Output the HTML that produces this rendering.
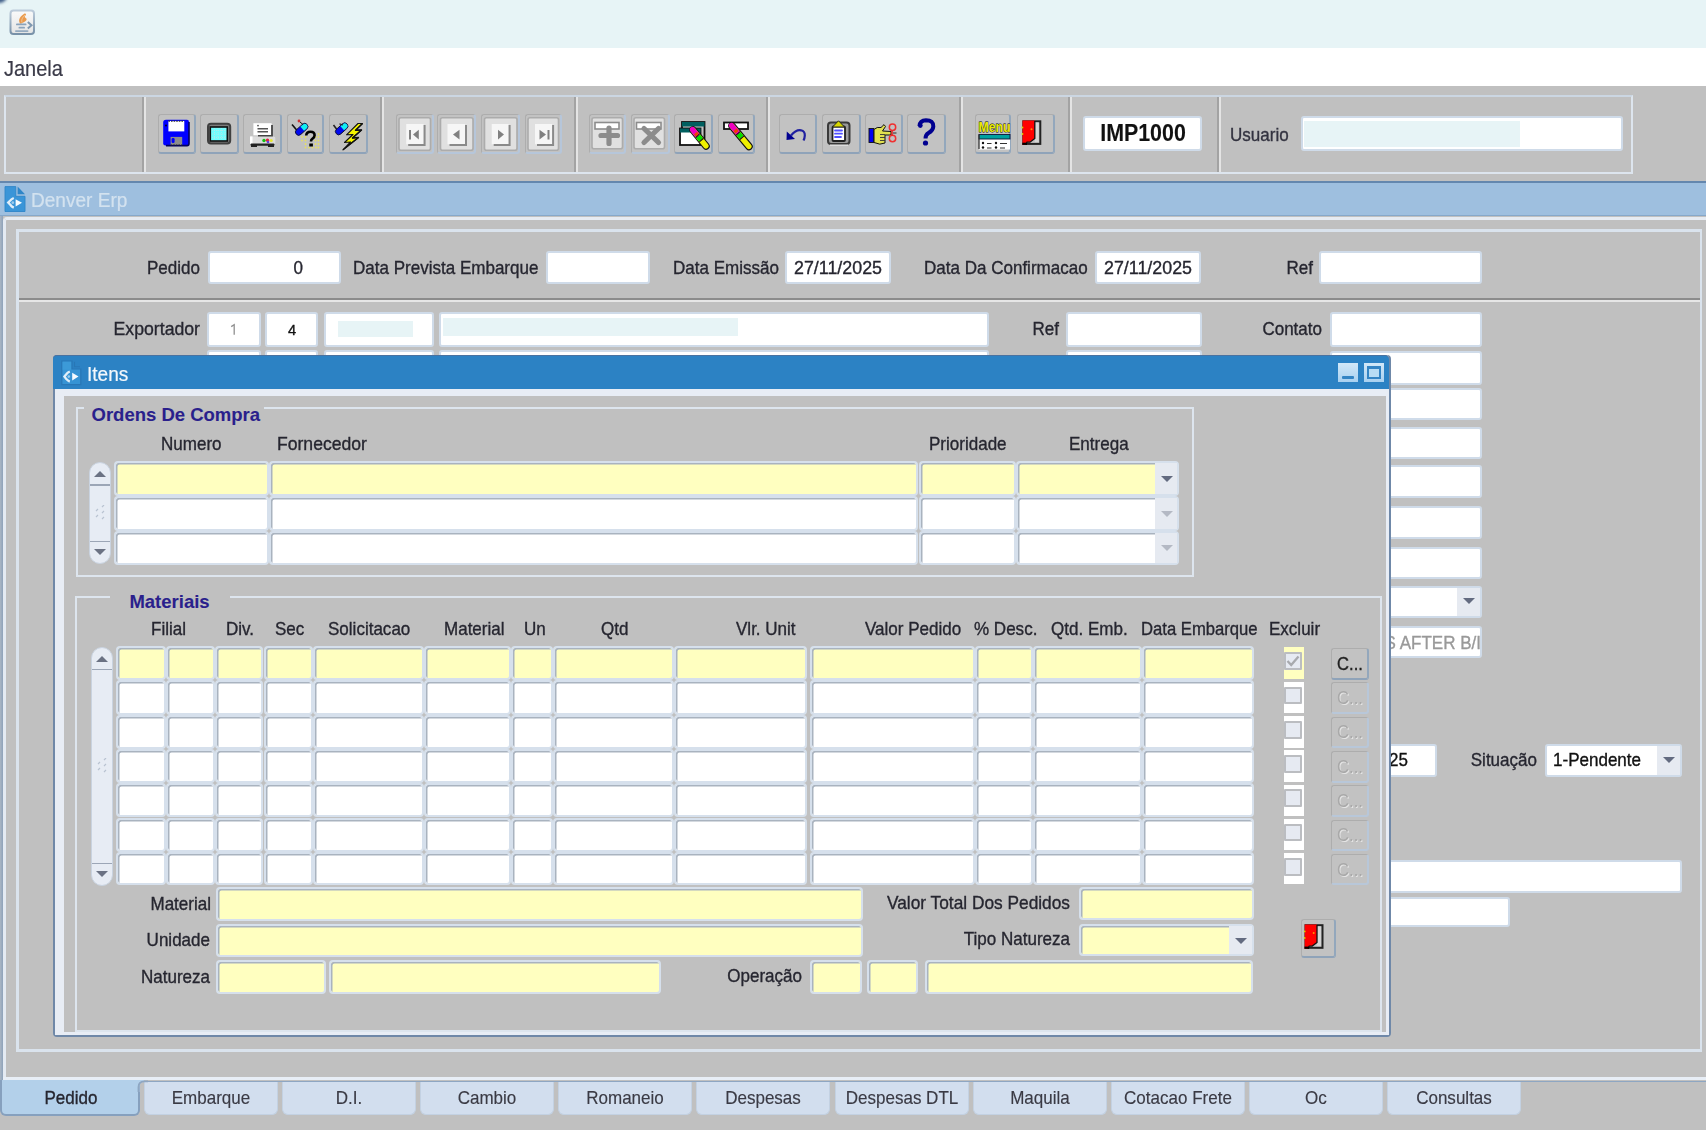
<!DOCTYPE html>
<html><head><meta charset="utf-8"><title>Denver Erp</title><style>
*{margin:0;padding:0;box-sizing:border-box}
html,body{width:1706px;height:1130px;overflow:hidden;background:#c0c0c0;font-family:"Liberation Sans",sans-serif;color:#262630}
div,span{position:absolute}
.t{white-space:nowrap}
.f{background:#fff;border:2px solid #cfdbe9;border-radius:3px}
.g{background:#fff;border:2px solid #d6e0ec;border-radius:4px;box-shadow:inset 1.5px 1.5px 0 #a9b3bf}
.y{background:#ffffc0}
.btn{border-radius:3px;border-top:1px solid #adadad;border-left:1px solid #adadad;border-right:2px solid #93a7bc;border-bottom:2px solid #8fa3b9;background:#c2c2c2}
.dd{background:#e6eaf1}
</style></head><body>
<div style="left:0px;top:0px;width:1706px;height:48px;background:#e7f4f6"></div>
<div style="left:-9px;top:-11px;width:16px;height:14px;border-radius:50%;background:#3d5c86;filter:blur(1.5px)"></div>
<svg style="position:absolute;left:0px;top:0px" width="45" height="45" viewBox="0 0 45 45"><defs><linearGradient id="jb" x1="0" y1="0" x2="0" y2="1"><stop offset="0" stop-color="#bccbda"/><stop offset="1" stop-color="#7891a8"/></linearGradient>
<linearGradient id="jf" x1="0" y1="0" x2="0" y2="1"><stop offset="0" stop-color="#fafafa"/><stop offset="1" stop-color="#e4e4e4"/></linearGradient></defs>
<rect x="10.5" y="10.5" width="23.5" height="23.5" rx="3" fill="url(#jf)" stroke="url(#jb)" stroke-width="2"/>
<path d="M20 23.5 C17.5 19 21 16 24.5 13.5 C26 13 26.5 14.5 25.5 15.5 C23 18 27.5 17.5 26.5 20 C25.5 22 22 22.5 21 23.8 Z" fill="#ea9a4c"/>
<path d="M22 22.5 C21 19.5 23 17 25 15" stroke="#f6d0a8" stroke-width="0.8" fill="none"/>
<rect x="16" y="23.5" width="10.5" height="1.8" rx="0.9" fill="#8ba3bb"/>
<rect x="18.5" y="26.8" width="6.5" height="1.8" rx="0.9" fill="#8ba3bb"/>
<rect x="15" y="30.2" width="13.5" height="1.8" rx="0.9" fill="#95abc0"/>
<path d="M27.8 22 L31.5 25.3 L27.8 28.6" stroke="#7f98b0" stroke-width="2" fill="none"/></svg>
<div style="left:0px;top:48px;width:1706px;height:38px;background:#fff"></div>
<span class="t" style="top:58.8px;font-size:21.5px;line-height:21.5px;color:#3a3a48;-webkit-text-stroke:0.2px #3a3a48;left:4px;transform:scaleX(0.93);transform-origin:left;">Janela</span>
<div style="left:4px;top:95px;width:1629px;height:79px;border:2px solid #dde5ee;border-top-color:#cbd6e2"></div>
<div style="left:142px;top:97px;width:2px;height:75px;background:#a3a3a3"></div>
<div style="left:144px;top:97px;width:2px;height:75px;background:#e4e4e4"></div>
<div style="left:380px;top:97px;width:2px;height:75px;background:#a3a3a3"></div>
<div style="left:382px;top:97px;width:2px;height:75px;background:#e4e4e4"></div>
<div style="left:574px;top:97px;width:2px;height:75px;background:#a3a3a3"></div>
<div style="left:576px;top:97px;width:2px;height:75px;background:#e4e4e4"></div>
<div style="left:766px;top:97px;width:2px;height:75px;background:#a3a3a3"></div>
<div style="left:768px;top:97px;width:2px;height:75px;background:#e4e4e4"></div>
<div style="left:959px;top:97px;width:2px;height:75px;background:#a3a3a3"></div>
<div style="left:961px;top:97px;width:2px;height:75px;background:#e4e4e4"></div>
<div style="left:1068px;top:97px;width:2px;height:75px;background:#a3a3a3"></div>
<div style="left:1070px;top:97px;width:2px;height:75px;background:#e4e4e4"></div>
<div style="left:1217px;top:97px;width:2px;height:75px;background:#a3a3a3"></div>
<div style="left:1219px;top:97px;width:2px;height:75px;background:#e4e4e4"></div>
<div class="btn" style="left:158px;top:114.2px;width:37.5px;height:39.7px;"></div>
<div class="btn" style="left:199.5px;top:114.2px;width:39px;height:39.7px;"></div>
<div class="btn" style="left:243px;top:114.2px;width:39px;height:39.7px;"></div>
<div class="btn" style="left:286.5px;top:114.2px;width:37.5px;height:39.7px;"></div>
<div class="btn" style="left:328.5px;top:114.2px;width:39px;height:39.7px;"></div>
<div class="btn" style="left:395.5px;top:114.2px;width:38px;height:39.7px;border-right-color:#b6c6da;border-bottom-color:#b6c6da"></div>
<div class="btn" style="left:437px;top:114.2px;width:39px;height:39.7px;border-right-color:#b6c6da;border-bottom-color:#b6c6da"></div>
<div class="btn" style="left:481px;top:114.2px;width:39px;height:39.7px;border-right-color:#b6c6da;border-bottom-color:#b6c6da"></div>
<div class="btn" style="left:524.5px;top:114.2px;width:37px;height:39.7px;border-right-color:#b6c6da;border-bottom-color:#b6c6da"></div>
<div class="btn" style="left:588.5px;top:114.2px;width:37.5px;height:39.7px;border-right-color:#b6c6da;border-bottom-color:#b6c6da"></div>
<div class="btn" style="left:630.5px;top:114.2px;width:39px;height:39.7px;border-right-color:#b6c6da;border-bottom-color:#b6c6da"></div>
<div class="btn" style="left:674px;top:114.2px;width:38.5px;height:39.7px;"></div>
<div class="btn" style="left:717.5px;top:114.2px;width:37px;height:39.7px;"></div>
<div class="btn" style="left:778.5px;top:114.2px;width:38.5px;height:39.7px;"></div>
<div class="btn" style="left:822px;top:114.2px;width:38.5px;height:39.7px;"></div>
<div class="btn" style="left:865px;top:114.2px;width:37.5px;height:39.7px;"></div>
<div class="btn" style="left:907px;top:114.2px;width:38.5px;height:39.7px;"></div>
<div class="btn" style="left:975px;top:114.2px;width:36px;height:39.7px;"></div>
<div class="btn" style="left:1016.5px;top:114.2px;width:38.5px;height:39.7px;"></div>
<svg style="position:absolute;left:0;top:0" width="1706" height="180" viewBox="0 0 1706 180"><path d="M166 119.8 H187 Q189 119.8 189 122 V143.5 Q189 145.6 187 145.6 H165.5 Q163.2 145.6 163.2 143.5 V122.5 Q163.2 119.8 166 119.8Z" fill="#0000ff"/>
<path d="M189 122 V143.5 Q189 145.6 187 145.6 H166" stroke="#000060" stroke-width="1.6" fill="none"/>
<rect x="168.4" y="121" width="15.9" height="10.4" fill="#fff"/>
<path d="M168.4 121.2 H184.3" stroke="#333" stroke-width="1.2" stroke-dasharray="1.6 1"/>
<rect x="170.6" y="136.9" width="11.6" height="8" fill="#8c8c8c"/><rect x="171.6" y="138" width="3" height="5" rx="1.2" fill="#0000ff"/>
<path d="M170.6 145 H182.2" stroke="#222" stroke-width="1.2" stroke-dasharray="1.6 1"/>
<circle cx="166" cy="125.5" r="0.9" fill="#000"/>
<rect x="208" y="123.8" width="22.2" height="19.8" rx="3" fill="#7c7c7c" stroke="#404040" stroke-width="2"/>
<rect x="210.3" y="127" width="17" height="14" fill="#70ffff" stroke="#101010" stroke-width="1.6"/>
<path d="M212 130.5h14M212 134h14M212 137.5h14M214.5 128v12M218 128v12M221.5 128v12M225 128v12" stroke="#b8e8e8" stroke-width="0.8" stroke-dasharray="1 1"/>
<rect x="253.4" y="123.2" width="18.2" height="12.1" fill="#fff"/>
<path d="M272 125 V136 H258" stroke="#444" stroke-width="1.8" fill="none"/>
<path d="M257.5 128.7h10.5M257.5 131.8h10.5" stroke="#555" stroke-width="1.5"/><circle cx="258" cy="125.6" r="0.9" fill="#555"/>
<rect x="250" y="136.4" width="25.3" height="7.9" rx="1.5" fill="#dcdcdc"/><rect x="250" y="136.4" width="2.5" height="7.9" fill="#fff"/>
<circle cx="264" cy="140.5" r="1.7" fill="#10c010"/><circle cx="267.5" cy="140.3" r="1.7" fill="#e02040"/><circle cx="268" cy="142" r="1.3" fill="#6040e0"/><circle cx="271.2" cy="140.5" r="1.6" fill="#e8e830"/>
<rect x="250.5" y="143.6" width="24" height="2.2" rx="1" fill="#222"/><rect x="251" y="145" width="6" height="2" fill="#222"/><rect x="268" y="145" width="6" height="2" fill="#222"/>
<g fill="#e8e060"><circle cx="302" cy="137" r="0.9"/><circle cx="302" cy="140.5" r="0.9"/><circle cx="305.5" cy="137" r="0.9"/><circle cx="305.5" cy="140.5" r="0.9"/><circle cx="305.5" cy="144" r="0.9"/><circle cx="305.5" cy="147.5" r="0.9"/>
<circle cx="309" cy="147.5" r="0.9"/><circle cx="312.5" cy="147.5" r="0.9"/><circle cx="316" cy="147.5" r="0.9"/><circle cx="318.5" cy="147.5" r="0.9"/>
<circle cx="315.5" cy="137" r="0.9"/><circle cx="318.5" cy="134" r="0.9"/><circle cx="318.5" cy="137" r="0.9"/><circle cx="318.5" cy="140.5" r="0.9"/><circle cx="318.5" cy="144" r="0.9"/><circle cx="315.5" cy="140.5" r="0.9"/><circle cx="315.5" cy="144" r="0.9"/></g>
<path d="M292 124.5 L297.5 131" stroke="#111" stroke-width="1.6"/>
<g transform="rotate(-42 301.5 129.5)"><rect x="294.5" y="126.3" width="14.5" height="6.4" rx="3.2" fill="#0008f0" stroke="#101030" stroke-width="0.9"/><path d="M302.5 126.8 H306 Q308.6 126.8 308.6 129.5 Q308.6 132.2 306 132.2 H302.5 Z" fill="#10f0f0"/></g>
<circle cx="299" cy="121" r="1.4" fill="#d03030"/><path d="M300 122 L303 124.5" stroke="#111" stroke-width="1"/>
<path d="M306.2 135.5 Q306.5 131.7 310.5 131.7 Q314.6 131.7 314.6 135.3 Q314.6 137.5 312.3 138.8 Q311 139.6 311 141.5" stroke="#000" stroke-width="2.6" fill="none"/>
<rect x="309.3" y="143.5" width="3.6" height="3" fill="#000"/>
<path d="M333.5 125 L338 131" stroke="#222" stroke-width="1.6"/>
<g transform="rotate(-42 341.5 129)"><rect x="334.5" y="125.8" width="14.5" height="6.4" rx="3.2" fill="#0008f0" stroke="#101030" stroke-width="0.9"/><path d="M342.5 126.3 H346 Q348.6 126.3 348.6 129 Q348.6 131.7 346 131.7 H342.5 Z" fill="#10f0f0"/></g>
<path d="M339.5 123.8 L343 125" stroke="#222" stroke-width="1.3"/>
<path d="M362.5 123.5 L355.5 130.3 L361.5 130 L352.5 138 L358.5 137.5 L343 149.8 L350.5 142 L344.5 142.5 L353 134.5 L346.5 134.8 L358 123.5 Z" fill="#f6f600" stroke="#111" stroke-width="1.1" stroke-linejoin="round"/>
<path d="M362.5 123.5 L355.5 130.3 L361.5 130 L352.5 138 L358.5 137.5 L343 149.8" stroke="#111" stroke-width="1.4" fill="none" stroke-linejoin="round"/>
<rect x="399.0" y="117.7" width="31.5" height="32.6" rx="2" fill="#e0e0e0" stroke="#acacac" stroke-width="1.6"/>
<rect x="406.2" y="124" width="17.4" height="20.3" fill="#f6f6f6"/>
<path d="M408.2 145 H424.6 V125" stroke="#8a8a8a" stroke-width="2" fill="none"/><rect x="409" y="130" width="2" height="9.5" fill="#808080"/><path d="M418.8 129.8 V139.4 L413 134.6 Z" fill="#808080"/>
<rect x="440.5" y="117.7" width="32.5" height="32.6" rx="2" fill="#e0e0e0" stroke="#acacac" stroke-width="1.6"/>
<rect x="447.5" y="124" width="17.5" height="20.3" fill="#f6f6f6"/>
<path d="M449.5 145 H466 V125" stroke="#8a8a8a" stroke-width="2" fill="none"/><path d="M459.5 129.8 V139.4 L453 134.6 Z" fill="#808080"/>
<rect x="484.5" y="117.7" width="32.5" height="32.6" rx="2" fill="#e0e0e0" stroke="#acacac" stroke-width="1.6"/>
<rect x="491.7" y="124" width="16.9" height="20.3" fill="#f6f6f6"/>
<path d="M493.7 145 H509.6 V125" stroke="#8a8a8a" stroke-width="2" fill="none"/><path d="M498 129.8 V139.4 L504 134.6 Z" fill="#808080"/>
<rect x="528.0" y="117.7" width="30.5" height="32.6" rx="2" fill="#e0e0e0" stroke="#acacac" stroke-width="1.6"/>
<rect x="535" y="124" width="17.1" height="20.3" fill="#f6f6f6"/>
<path d="M537 145 H553.1 V125" stroke="#8a8a8a" stroke-width="2" fill="none"/><path d="M539.5 129.8 V139.4 L546 134.6 Z" fill="#808080"/><rect x="547.5" y="130" width="2" height="9.5" fill="#808080"/>
<rect x="592" y="117.7" width="30.5" height="31" rx="2" fill="#e0e0e0" stroke="#acacac" stroke-width="1.6"/>
<rect x="595" y="122.5" width="24" height="6.5" fill="#fff" stroke="#8c8c8c" stroke-width="1.6"/>
<path d="M609 128 V143.5 M601 135.5 H617.5" stroke="#8c8c8c" stroke-width="5.2" stroke-linecap="round"/>
<rect x="634" y="117.7" width="30.5" height="31" rx="2" fill="#e0e0e0" stroke="#acacac" stroke-width="1.6"/>
<rect x="636.5" y="122.5" width="24.5" height="6.5" fill="#fff" stroke="#8c8c8c" stroke-width="1.6"/>
<path d="M644 128.5 L658.5 142.5 M658.5 128.5 L644 142.5" stroke="#8c8c8c" stroke-width="5.2" stroke-linecap="round"/>
<rect x="682" y="122" width="22.5" height="17" fill="none" stroke="#111" stroke-width="1.8"/><rect x="682" y="122" width="22.5" height="4.5" fill="#005f5f"/>
<rect x="680" y="128.5" width="20.5" height="16.5" fill="#fff" stroke="#111" stroke-width="1.8"/><rect x="680" y="128.5" width="20.5" height="4" fill="#005f5f"/>
<path d="M693 130 L706 146" stroke="#111" stroke-width="7.5" stroke-linecap="round"/>
<path d="M693 130 L706 146" stroke="#f0f000" stroke-width="5.2" stroke-linecap="round"/>
<path d="M692.5 129.5 L697 135" stroke="#f000c0" stroke-width="5.2" stroke-linecap="round"/>
<path d="M695.5 133 L697.5 135.5" stroke="#f04000" stroke-width="4"/>
<path d="M698 136.2 L701 139.8" stroke="#00e000" stroke-width="5.2"/><path d="M697.3 135.5 L698 136.2 M701 139.8 L701.7 140.6" stroke="#111" stroke-width="5.2"/>
<rect x="724" y="122.5" width="24" height="6.5" fill="#fff" stroke="#111" stroke-width="1.8"/>
<path d="M732 126 L749 146.5" stroke="#111" stroke-width="7.5" stroke-linecap="round"/>
<path d="M732 126 L749 146.5" stroke="#f0f000" stroke-width="5.2" stroke-linecap="round"/>
<path d="M731.5 125.5 L737 132" stroke="#f000c0" stroke-width="5.2" stroke-linecap="round"/>
<path d="M735 129.8 L737 132.2" stroke="#f04000" stroke-width="4"/>
<path d="M738.5 133.8 L741.5 137.4" stroke="#00e000" stroke-width="5.2"/><path d="M737.8 133 L738.5 133.8 M741.5 137.4 L742.2 138.2" stroke="#111" stroke-width="5.2"/>
<path d="M786.8 131.5 L786.5 140 L795 139 Z" fill="#000090"/>
<path d="M791 135.5 Q796 129.5 801 130.3 Q805 131.2 804.8 135.5 Q804.6 138.5 803.5 140.5" stroke="#2020a0" stroke-width="2.2" fill="none"/>
<rect x="828" y="122.5" width="21.5" height="21.5" rx="3" fill="#9a9a9a" stroke="#3a3a3a" stroke-width="2"/>
<rect x="832.5" y="126.5" width="12.5" height="14.5" rx="1" fill="#fff" stroke="#202020" stroke-width="1.8"/>
<path d="M835 130.5h7M835 133.7h7M835 137h6" stroke="#5050ff" stroke-width="1.8" stroke-linecap="round"/>
<path d="M832.5 127 L838.5 120.8 L844.5 127 Z" fill="#d8d800" stroke="#222" stroke-width="1"/>
<rect x="830" y="144.5" width="18" height="1.2" fill="#e8e8e8"/>
<rect x="869" y="128.5" width="4.8" height="14" fill="#0000f0" stroke="#111" stroke-width="0.9"/>
<path d="M874 129.5 Q877 126.5 881 127.5 L884 124.6 L885.5 126.5 L882.5 131 L891 131.5 L891 135 L885 135 L885 143 Q880 145.5 874 142.5 Z" fill="#e0e050" stroke="#111" stroke-width="1"/>
<path d="M880 134.5h5M880 137.5h5M880 140.5h5" stroke="#333" stroke-width="0.9"/>
<circle cx="892.5" cy="127.3" r="3.2" fill="none" stroke="#f03030" stroke-width="1.5"/><circle cx="892.5" cy="138.5" r="3.2" fill="none" stroke="#f03030" stroke-width="1.5"/>
<path d="M892 130.5 L892 135.5" stroke="#e02020" stroke-width="1.5"/><path d="M893 133 L896.5 133" stroke="#444" stroke-width="1.2"/>
<path d="M919.5 126 Q920 120.5 926 120.3 Q933.5 120.3 933.3 126.5 Q933 130.5 928.5 133 Q925.5 134.8 925.5 138.5" stroke="#000090" stroke-width="4" fill="none"/>
<circle cx="920.3" cy="125.6" r="2.4" fill="#000090"/><circle cx="925.5" cy="143" r="2.6" fill="#000090"/>
<text x="978.5" y="131.5" font-family="Liberation Sans" font-weight="bold" font-size="15" fill="#e8e800" stroke="#000" stroke-width="0.8" paint-order="stroke" textLength="32" lengthAdjust="spacingAndGlyphs">Menu</text>
<rect x="979" y="134.5" width="31" height="15" fill="#fff"/><rect x="979" y="134.5" width="31" height="4.5" fill="#00a0a0" stroke="#113" stroke-width="0.9"/>
<path d="M979 134.5 V149" stroke="#333" stroke-width="1.3"/>
<circle cx="983" cy="143" r="1.2" fill="#111"/><circle cx="996" cy="143" r="1.2" fill="#111"/><circle cx="983" cy="147.5" r="1.2" fill="#111"/><circle cx="996" cy="147.5" r="1.2" fill="#111"/>
<path d="M987 143.5h4.5M1000 143.5h7M987 148h4.5M1000 148h5" stroke="#333" stroke-width="1.2"/>
<rect x="1023.3" y="121.3" width="17" height="22.6" fill="#c4c4c4" stroke="#222" stroke-width="2"/>
<rect x="1035" y="122.5" width="3.6" height="19.5" fill="#d6d6d6"/>
<path d="M1022.5 120.5 H1034.8 V138.5 L1030 142.2 L1027 142.2 L1026 145 H1022.5 Z" fill="#ff0000"/>
<path d="M1034.8 121 V138.5 L1030 142.2 L1027 142.2 L1026 144.5" stroke="#111" stroke-width="1.3" fill="none"/>
<path d="M1022.3 143.8 H1027" stroke="#000" stroke-width="2.2"/>
<circle cx="1031.5" cy="129.2" r="1" fill="#ff9000"/><circle cx="1022.5" cy="127.5" r="0.9" fill="#d8d800"/><circle cx="1022.5" cy="134" r="0.9" fill="#d8d800"/></svg>
<div class="f" style="left:1083px;top:116px;width:119px;height:35px;"></div>
<span class="t" style="top:122px;font-size:23px;line-height:23px;color:#111;font-weight:bold;-webkit-text-stroke:0.1px #111;left:842.5px;width:600px;text-align:center;transform:scaleX(0.93);transform-origin:center;">IMP1000</span>
<span class="t" style="top:126px;font-size:18.5px;line-height:18.5px;color:#333340;-webkit-text-stroke:0.35px #333340;left:1230px;transform:scaleX(0.92);transform-origin:left;">Usuario</span>
<div class="f" style="left:1301px;top:116px;width:322px;height:35px;"></div>
<div style="left:1304px;top:121px;width:216px;height:26px;background:#e7f4f6"></div>
<div style="left:0px;top:181px;width:1706px;height:35px;background:#9ebfdf;border-top:2px solid #6487ae;border-bottom:1px solid #86a8ca"></div>
<svg style="position:absolute;left:0px;top:180px" width="40" height="40" viewBox="0 180 40 40"><path d="M5 186.6 H15.8 V196.3 H25 V211.5 H5 Z" fill="#3a95d8" stroke="#2f86c8" stroke-width="0.9"/>
<path d="M17.6 186.6 L17.6 194.2 L25 194.2 Z" fill="#2f86c8"/>
<path d="M13.8 198 Q11.5 199 10.5 200.3 L8.2 202.6 L10.5 205 Q11.5 206.5 13.8 207.6" stroke="#e2eef8" stroke-width="2.3" fill="none"/>
<circle cx="12.8" cy="202.7" r="1.4" fill="#9ccaec"/>
<path d="M15.6 199.3 L22 202.8 L15.6 206.5 Z" fill="#f6fbff"/></svg>
<span class="t" style="top:189.6px;font-size:20.5px;line-height:20.5px;color:#d3e2ef;-webkit-text-stroke:0.2px #d3e2ef;left:31px;transform:scaleX(0.93);transform-origin:left;">Denver Erp</span>
<div style="left:0px;top:216px;width:3px;height:864px;background:linear-gradient(90deg,#aab6c4,#8ea2ba)"></div>
<div style="left:3px;top:217px;width:1703px;height:863px;border-left:3px solid #e4eaf2;border-top:3px solid #e6ebf2;border-top-left-radius:4px"></div>
<div style="left:16px;top:229px;width:1686px;height:823px;border:3px solid #dae3ed;border-right-width:2px"></div>
<div style="left:19px;top:298px;width:1681px;height:1.5px;background:#8c8c8c"></div>
<div style="left:19px;top:299.5px;width:1681px;height:2px;background:#e6e6e6"></div>
<span class="t" style="top:259px;font-size:18.5px;line-height:18.5px;-webkit-text-stroke:0.35px #262630;left:-400px;width:600px;text-align:right;transform:scaleX(0.92);transform-origin:right;">Pedido</span>
<div class="f" style="left:208px;top:251px;width:133px;height:33px;"></div>
<span class="t" style="top:259px;font-size:18.5px;line-height:18.5px;-webkit-text-stroke:0.35px #262630;left:-297px;width:600px;text-align:right;transform:scaleX(0.92);transform-origin:right;">0</span>
<span class="t" style="top:259px;font-size:18.5px;line-height:18.5px;-webkit-text-stroke:0.35px #262630;left:353px;transform:scaleX(0.92);transform-origin:left;">Data Prevista Embarque</span>
<div class="f" style="left:546px;top:251px;width:104px;height:33px;"></div>
<span class="t" style="top:259px;font-size:18.5px;line-height:18.5px;-webkit-text-stroke:0.35px #262630;left:673px;transform:scaleX(0.92);transform-origin:left;">Data Emissão</span>
<div class="f" style="left:785px;top:251px;width:106px;height:33px;"></div>
<span class="t" style="top:259px;font-size:18.5px;line-height:18.5px;-webkit-text-stroke:0.35px #262630;left:794px;transform:scaleX(0.965);transform-origin:left;">27/11/2025</span>
<span class="t" style="top:259px;font-size:18.5px;line-height:18.5px;-webkit-text-stroke:0.35px #262630;left:924px;transform:scaleX(0.92);transform-origin:left;">Data Da Confirmacao</span>
<div class="f" style="left:1095px;top:251px;width:106px;height:33px;"></div>
<span class="t" style="top:259px;font-size:18.5px;line-height:18.5px;-webkit-text-stroke:0.35px #262630;left:1104px;transform:scaleX(0.965);transform-origin:left;">27/11/2025</span>
<span class="t" style="top:259px;font-size:18.5px;line-height:18.5px;-webkit-text-stroke:0.35px #262630;left:713px;width:600px;text-align:right;transform:scaleX(0.92);transform-origin:right;">Ref</span>
<div class="f" style="left:1319.2px;top:250.5px;width:162.8px;height:33.8px;"></div>
<span class="t" style="top:319.9px;font-size:18.5px;line-height:18.5px;-webkit-text-stroke:0.35px #262630;left:-400px;width:600px;text-align:right;transform:scaleX(0.955);transform-origin:right;">Exportador</span>
<div class="f" style="left:207px;top:312px;width:54px;height:34.5px;"></div>
<div class="f" style="left:207px;top:350px;width:54px;height:34px;"></div>
<div class="f" style="left:265px;top:312px;width:53px;height:34.5px;"></div>
<div class="f" style="left:265px;top:350px;width:53px;height:34px;"></div>
<div class="f" style="left:324px;top:312px;width:110px;height:34.5px;"></div>
<div class="f" style="left:324px;top:350px;width:110px;height:34px;"></div>
<div class="f" style="left:439px;top:312px;width:550px;height:34.5px;"></div>
<div class="f" style="left:439px;top:350px;width:550px;height:34px;"></div>
<svg style="position:absolute;left:228px;top:322px" width="12" height="15" viewBox="0 0 12 15"><path d="M3.2 4.6 L6.2 2.6 V12.8" stroke="#909090" stroke-width="1.3" fill="none"/></svg>
<span class="t" style="top:321.7px;font-size:15.5px;line-height:15.5px;color:#111;-webkit-text-stroke:0.35px #111;left:-8.5px;width:600px;text-align:center;transform:scaleX(0.95);transform-origin:center;">4</span>
<div style="left:338px;top:321px;width:75px;height:16px;background:#e7f4f6"></div>
<div style="left:443px;top:318px;width:295px;height:18px;background:#e7f4f6"></div>
<span class="t" style="top:319.9px;font-size:18.5px;line-height:18.5px;-webkit-text-stroke:0.35px #262630;left:458.6px;width:600px;text-align:right;transform:scaleX(0.92);transform-origin:right;">Ref</span>
<div class="f" style="left:1066px;top:312px;width:136px;height:34.5px;"></div>
<div class="f" style="left:1066px;top:350px;width:136px;height:34px;"></div>
<span class="t" style="top:319.9px;font-size:18.5px;line-height:18.5px;-webkit-text-stroke:0.35px #262630;left:722px;width:600px;text-align:right;transform:scaleX(0.92);transform-origin:right;">Contato</span>
<div class="f" style="left:1330px;top:312px;width:152px;height:34.5px;"></div>
<div class="f" style="left:1330px;top:350.5px;width:152px;height:34px;"></div>
<div class="f" style="left:1330px;top:388px;width:152px;height:32px;"></div>
<div class="f" style="left:1330px;top:427px;width:152px;height:32px;"></div>
<div class="f" style="left:1330px;top:465px;width:152px;height:33px;"></div>
<div class="f" style="left:1330px;top:506px;width:152px;height:33px;"></div>
<div class="f" style="left:1330px;top:547px;width:152px;height:32px;"></div>
<div class="f" style="left:1330px;top:626px;width:152px;height:31.5px;"></div>
<div class="f" style="left:1330px;top:586px;width:152px;height:32px;"></div>
<div class="dd" style="left:1457px;top:588px;width:23px;height:28px;"></div>
<svg style="position:absolute;left:1462px;top:597px" width="14" height="8" viewBox="0 0 14 8"><path d="M1 1 H13 L7 7 Z" fill="#636b80"/></svg>
<span class="t" style="top:633.7px;font-size:18.5px;line-height:18.5px;color:#999;-webkit-text-stroke:0.35px #999;left:881px;width:600px;text-align:right;transform:scaleX(0.92);transform-origin:right;">S AFTER B/I</span>
<div class="f" style="left:1300px;top:744px;width:137px;height:33px;"></div>
<span class="t" style="top:750.6px;font-size:18.5px;line-height:18.5px;color:#111;-webkit-text-stroke:0.35px #111;left:1388.5px;transform:scaleX(0.92);transform-origin:left;">25</span>
<span class="t" style="top:750.6px;font-size:18.5px;line-height:18.5px;-webkit-text-stroke:0.35px #262630;left:937px;width:600px;text-align:right;transform:scaleX(0.92);transform-origin:right;">Situação</span>
<div class="f" style="left:1545px;top:744px;width:137px;height:33px;"></div>
<div class="dd" style="left:1657px;top:746px;width:23px;height:29px;"></div>
<svg style="position:absolute;left:1662px;top:756px" width="14" height="8" viewBox="0 0 14 8"><path d="M1 1 H13 L7 7 Z" fill="#636b80"/></svg>
<span class="t" style="top:750.6px;font-size:18.5px;line-height:18.5px;color:#111;-webkit-text-stroke:0.35px #111;left:1553px;transform:scaleX(0.92);transform-origin:left;">1-Pendente</span>
<div class="f" style="left:1300px;top:860px;width:382px;height:33px;"></div>
<div class="f" style="left:1300px;top:897px;width:210px;height:30px;"></div>
<div style="left:144px;top:1080.5px;width:1562px;height:1.5px;background:#8ea6c2"></div>
<div style="left:0px;top:1080px;width:139.5px;height:35.5px;background:#b3d0ea;border:2px solid #86a0be;border-top:none;border-radius:0 0 6px 6px"></div>
<span class="t" style="top:1088.6px;font-size:18.5px;line-height:18.5px;color:#262630;-webkit-text-stroke:0.35px #262630;left:-229.5px;width:600px;text-align:center;transform:scaleX(0.92);transform-origin:center;">Pedido</span>
<div style="left:144px;top:1082px;width:134px;height:33px;background:#d2deee;border:1px solid #c3d1e2;border-top:none;border-radius:0 0 6px 6px"></div>
<span class="t" style="top:1088.6px;font-size:18.5px;line-height:18.5px;color:#3a3a44;-webkit-text-stroke:0.15px #3a3a44;left:-89px;width:600px;text-align:center;transform:scaleX(0.92);transform-origin:center;">Embarque</span>
<div style="left:282.1px;top:1082px;width:134px;height:33px;background:#d2deee;border:1px solid #c3d1e2;border-top:none;border-radius:0 0 6px 6px"></div>
<span class="t" style="top:1088.6px;font-size:18.5px;line-height:18.5px;color:#3a3a44;-webkit-text-stroke:0.15px #3a3a44;left:49.1px;width:600px;text-align:center;transform:scaleX(0.92);transform-origin:center;">D.I.</span>
<div style="left:420.2px;top:1082px;width:134px;height:33px;background:#d2deee;border:1px solid #c3d1e2;border-top:none;border-radius:0 0 6px 6px"></div>
<span class="t" style="top:1088.6px;font-size:18.5px;line-height:18.5px;color:#3a3a44;-webkit-text-stroke:0.15px #3a3a44;left:187.2px;width:600px;text-align:center;transform:scaleX(0.92);transform-origin:center;">Cambio</span>
<div style="left:558.3px;top:1082px;width:134px;height:33px;background:#d2deee;border:1px solid #c3d1e2;border-top:none;border-radius:0 0 6px 6px"></div>
<span class="t" style="top:1088.6px;font-size:18.5px;line-height:18.5px;color:#3a3a44;-webkit-text-stroke:0.15px #3a3a44;left:325.3px;width:600px;text-align:center;transform:scaleX(0.92);transform-origin:center;">Romaneio</span>
<div style="left:696.4px;top:1082px;width:134px;height:33px;background:#d2deee;border:1px solid #c3d1e2;border-top:none;border-radius:0 0 6px 6px"></div>
<span class="t" style="top:1088.6px;font-size:18.5px;line-height:18.5px;color:#3a3a44;-webkit-text-stroke:0.15px #3a3a44;left:463.4px;width:600px;text-align:center;transform:scaleX(0.92);transform-origin:center;">Despesas</span>
<div style="left:834.5px;top:1082px;width:134px;height:33px;background:#d2deee;border:1px solid #c3d1e2;border-top:none;border-radius:0 0 6px 6px"></div>
<span class="t" style="top:1088.6px;font-size:18.5px;line-height:18.5px;color:#3a3a44;-webkit-text-stroke:0.15px #3a3a44;left:601.5px;width:600px;text-align:center;transform:scaleX(0.92);transform-origin:center;">Despesas DTL</span>
<div style="left:972.6px;top:1082px;width:134px;height:33px;background:#d2deee;border:1px solid #c3d1e2;border-top:none;border-radius:0 0 6px 6px"></div>
<span class="t" style="top:1088.6px;font-size:18.5px;line-height:18.5px;color:#3a3a44;-webkit-text-stroke:0.15px #3a3a44;left:739.6px;width:600px;text-align:center;transform:scaleX(0.92);transform-origin:center;">Maquila</span>
<div style="left:1110.7px;top:1082px;width:134px;height:33px;background:#d2deee;border:1px solid #c3d1e2;border-top:none;border-radius:0 0 6px 6px"></div>
<span class="t" style="top:1088.6px;font-size:18.5px;line-height:18.5px;color:#3a3a44;-webkit-text-stroke:0.15px #3a3a44;left:877.7px;width:600px;text-align:center;transform:scaleX(0.92);transform-origin:center;">Cotacao Frete</span>
<div style="left:1248.8px;top:1082px;width:134px;height:33px;background:#d2deee;border:1px solid #c3d1e2;border-top:none;border-radius:0 0 6px 6px"></div>
<span class="t" style="top:1088.6px;font-size:18.5px;line-height:18.5px;color:#3a3a44;-webkit-text-stroke:0.15px #3a3a44;left:1015.8px;width:600px;text-align:center;transform:scaleX(0.92);transform-origin:center;">Oc</span>
<div style="left:1386.9px;top:1082px;width:134px;height:33px;background:#d2deee;border:1px solid #c3d1e2;border-top:none;border-radius:0 0 6px 6px"></div>
<span class="t" style="top:1088.6px;font-size:18.5px;line-height:18.5px;color:#3a3a44;-webkit-text-stroke:0.15px #3a3a44;left:1153.9px;width:600px;text-align:center;transform:scaleX(0.92);transform-origin:center;">Consultas</span>
<div style="left:3px;top:1077px;width:1703px;height:3px;background:#e8eef6"></div>
<svg style="position:absolute;left:136px;top:1078px" width="12" height="14" viewBox="0 0 12 14"><path d="M0 2 H8 V4 Q3.5 4 3.5 9 V14 H0 Z" fill="#b3d0ea"/><path d="M2.5 14 V9 Q2.5 3.3 8.5 3.3 H12" stroke="#8ea6c2" stroke-width="1.8" fill="none"/></svg>
<div style="left:53px;top:355px;width:1338px;height:682px;background:#c0c0c0;border:2px solid #6f88a8;border-top:none;border-radius:4px 4px 4px 4px"></div>
<div style="left:53px;top:355px;width:1336px;height:34px;background:#2c82c4;border-top:1.5px solid #4a72a0;border-radius:4px 4px 0 0"></div>
<div style="left:55px;top:389px;width:1334px;height:646px;border:9px solid #e8edf5;border-top-width:7px;border-right-width:3px;border-bottom-width:3px"></div>
<svg style="position:absolute;left:55px;top:355px" width="40" height="40" viewBox="55 355 40 40"><path d="M61.8 361 H72 V369 H80.8 V384.6 H61.8 Z" fill="#3693d4" stroke="#2877b6" stroke-width="1.2"/>
<rect x="62.6" y="361.8" width="8.4" height="8" fill="#3c9ad8"/>
<path d="M74.5 361.8 V366.8 H80" stroke="#2877b6" stroke-width="1.1" fill="none"/>
<path d="M69.8 371.5 Q67.5 372.5 66.5 374 L64.4 376.6 L66.5 379.2 Q67.5 380.7 69.8 381.6" stroke="#e2eef8" stroke-width="2.3" fill="none"/>
<circle cx="68.8" cy="376.6" r="1.3" fill="#9ccaec"/>
<path d="M72.2 372.8 L78.5 376.6 L72.2 380.4 Z" fill="#f6fbff"/></svg>
<span class="t" style="top:363.6px;font-size:20.5px;line-height:20.5px;color:#f4f8fc;-webkit-text-stroke:0.2px #f4f8fc;left:87px;transform:scaleX(0.93);transform-origin:left;">Itens</span>
<div style="left:1338px;top:363px;width:19.5px;height:19px;background:linear-gradient(#d2e8f8,#a8d0f0)"></div>
<div style="left:1342px;top:376px;width:12px;height:3px;background:#3384c4;border-radius:1px"></div>
<div style="left:1364px;top:363px;width:19.5px;height:19px;background:linear-gradient(#d2e8f8,#a8d0f0)"></div>
<div style="left:1367px;top:366px;width:13.5px;height:13px;border:2px solid #3384c4;border-top-width:3px;background:#b8dcf4"></div>
<div style="left:76px;top:407px;width:1118px;height:170px;border:2px solid #dde5ee"></div>
<div style="left:84px;top:405px;width:180px;height:5px;background:#c0c0c0"></div>
<span class="t" style="top:406.3px;font-size:18.5px;line-height:18.5px;color:#2a1f8c;font-weight:bold;-webkit-text-stroke:0.1px #2a1f8c;left:91.5px;">Ordens De Compra</span>
<span class="t" style="top:435.3px;font-size:18.5px;line-height:18.5px;-webkit-text-stroke:0.35px #262630;left:160.7px;transform:scaleX(0.92);transform-origin:left;">Numero</span>
<span class="t" style="top:435.3px;font-size:18.5px;line-height:18.5px;-webkit-text-stroke:0.35px #262630;left:277px;transform:scaleX(0.95);transform-origin:left;">Fornecedor</span>
<span class="t" style="top:435.3px;font-size:18.5px;line-height:18.5px;-webkit-text-stroke:0.35px #262630;left:929px;transform:scaleX(0.92);transform-origin:left;">Prioridade</span>
<span class="t" style="top:435.3px;font-size:18.5px;line-height:18.5px;-webkit-text-stroke:0.35px #262630;left:1068.6px;transform:scaleX(0.92);transform-origin:left;">Entrega</span>
<div style="left:89px;top:462px;width:22px;height:102px;background:#e7ecf4;border:1px solid #c9d3e0;border-radius:11px"></div>
<div style="left:90px;top:484px;width:20px;height:1.5px;background:#9ca6b6"></div>
<div style="left:90px;top:540.5px;width:20px;height:1.5px;background:#9ca6b6"></div>
<svg style="position:absolute;left:94px;top:470px" width="12" height="7" viewBox="0 0 12 7"><path d="M0 7 L6 1 L12 7Z" fill="#6b7283"/></svg>
<svg style="position:absolute;left:94px;top:549px" width="12" height="7" viewBox="0 0 12 7"><path d="M0 0 L6 6 L12 0Z" fill="#6b7283"/></svg>
<svg style="position:absolute;left:94px;top:505px" width="12" height="16" viewBox="0 0 12 16"><path d="M2 6 L4 4 M8 2 L10 0 M2 12 L4 10 M8 8 L10 6 M8 14 L10 12" stroke="#b9c3d1" stroke-width="1.2"/></svg>
<div class="g" style="left:113.5px;top:461px;width:155.2px;height:35px;background:#ffffc0"></div>
<div class="g" style="left:268.7px;top:461px;width:649.8px;height:35px;background:#ffffc0"></div>
<div class="g" style="left:918.5px;top:461px;width:97.8px;height:35px;background:#ffffc0"></div>
<div class="g" style="left:1016.3px;top:461px;width:163px;height:35px;background:#ffffc0"></div>
<div class="dd" style="left:1154.5px;top:463px;width:22.5px;height:31px;"></div>
<svg style="position:absolute;left:1160px;top:475px" width="14" height="8" viewBox="0 0 14 8"><path d="M1 1 H13 L7 7 Z" fill="#636b80"/></svg>
<div class="g" style="left:113.5px;top:496px;width:155.2px;height:35px;"></div>
<div class="g" style="left:268.7px;top:496px;width:649.8px;height:35px;"></div>
<div class="g" style="left:918.5px;top:496px;width:97.8px;height:35px;"></div>
<div class="g" style="left:1016.3px;top:496px;width:163px;height:35px;"></div>
<div class="dd" style="left:1154.5px;top:498px;width:22.5px;height:31px;"></div>
<svg style="position:absolute;left:1160px;top:510px" width="14" height="8" viewBox="0 0 14 8"><path d="M1 1 H13 L7 7 Z" fill="#b4b9c4"/></svg>
<div class="g" style="left:113.5px;top:531px;width:155.2px;height:33.5px;"></div>
<div class="g" style="left:268.7px;top:531px;width:649.8px;height:33.5px;"></div>
<div class="g" style="left:918.5px;top:531px;width:97.8px;height:33.5px;"></div>
<div class="g" style="left:1016.3px;top:531px;width:163px;height:33.5px;"></div>
<div class="dd" style="left:1154.5px;top:533px;width:22.5px;height:29.5px;"></div>
<svg style="position:absolute;left:1160px;top:544.2px" width="14" height="8" viewBox="0 0 14 8"><path d="M1 1 H13 L7 7 Z" fill="#b4b9c4"/></svg>
<div style="left:75px;top:596px;width:1307px;height:436px;border:2px solid #dde5ee;border-right-width:2px"></div>
<div style="left:110px;top:594px;width:120px;height:5px;background:#c0c0c0"></div>
<span class="t" style="top:593.3px;font-size:18.5px;line-height:18.5px;color:#2a1f8c;font-weight:bold;-webkit-text-stroke:0.1px #2a1f8c;left:129.4px;">Materiais</span>
<span class="t" style="top:620.3px;font-size:18.5px;line-height:18.5px;-webkit-text-stroke:0.35px #262630;left:151px;transform:scaleX(0.92);transform-origin:left;">Filial</span>
<span class="t" style="top:620.3px;font-size:18.5px;line-height:18.5px;-webkit-text-stroke:0.35px #262630;left:226px;transform:scaleX(0.92);transform-origin:left;">Div.</span>
<span class="t" style="top:620.3px;font-size:18.5px;line-height:18.5px;-webkit-text-stroke:0.35px #262630;left:274.8px;transform:scaleX(0.92);transform-origin:left;">Sec</span>
<span class="t" style="top:620.3px;font-size:18.5px;line-height:18.5px;-webkit-text-stroke:0.35px #262630;left:328px;transform:scaleX(0.92);transform-origin:left;">Solicitacao</span>
<span class="t" style="top:620.3px;font-size:18.5px;line-height:18.5px;-webkit-text-stroke:0.35px #262630;left:443.5px;transform:scaleX(0.92);transform-origin:left;">Material</span>
<span class="t" style="top:620.3px;font-size:18.5px;line-height:18.5px;-webkit-text-stroke:0.35px #262630;left:524px;transform:scaleX(0.92);transform-origin:left;">Un</span>
<span class="t" style="top:620.3px;font-size:18.5px;line-height:18.5px;-webkit-text-stroke:0.35px #262630;left:601.3px;transform:scaleX(0.92);transform-origin:left;">Qtd</span>
<span class="t" style="top:620.3px;font-size:18.5px;line-height:18.5px;-webkit-text-stroke:0.35px #262630;left:736.2px;transform:scaleX(0.92);transform-origin:left;">Vlr. Unit</span>
<span class="t" style="top:620.3px;font-size:18.5px;line-height:18.5px;-webkit-text-stroke:0.35px #262630;left:865px;transform:scaleX(0.92);transform-origin:left;">Valor Pedido</span>
<span class="t" style="top:620.3px;font-size:18.5px;line-height:18.5px;-webkit-text-stroke:0.35px #262630;left:974.2px;transform:scaleX(0.92);transform-origin:left;">% Desc.</span>
<span class="t" style="top:620.3px;font-size:18.5px;line-height:18.5px;-webkit-text-stroke:0.35px #262630;left:1051px;transform:scaleX(0.92);transform-origin:left;">Qtd. Emb.</span>
<span class="t" style="top:620.3px;font-size:18.5px;line-height:18.5px;-webkit-text-stroke:0.35px #262630;left:1141.4px;transform:scaleX(0.9);transform-origin:left;">Data Embarque</span>
<span class="t" style="top:620.3px;font-size:18.5px;line-height:18.5px;-webkit-text-stroke:0.35px #262630;left:1269.4px;transform:scaleX(0.92);transform-origin:left;">Excluir</span>
<div style="left:91px;top:646.5px;width:22px;height:239.5px;background:#e7ecf4;border:1px solid #c9d3e0;border-radius:11px"></div>
<div style="left:92px;top:668.5px;width:20px;height:1.5px;background:#9ca6b6"></div>
<div style="left:92px;top:862.5px;width:20px;height:1.5px;background:#9ca6b6"></div>
<svg style="position:absolute;left:96px;top:654.5px" width="12" height="7" viewBox="0 0 12 7"><path d="M0 7 L6 1 L12 7Z" fill="#6b7283"/></svg>
<svg style="position:absolute;left:96px;top:871px" width="12" height="7" viewBox="0 0 12 7"><path d="M0 0 L6 6 L12 0Z" fill="#6b7283"/></svg>
<svg style="position:absolute;left:96px;top:758.2px" width="12" height="16" viewBox="0 0 12 16"><path d="M2 6 L4 4 M8 2 L10 0 M2 12 L4 10 M8 8 L10 6 M8 14 L10 12" stroke="#b9c3d1" stroke-width="1.2"/></svg>
<div class="g" style="left:116px;top:646px;width:49.5px;height:34.3px;background:#ffffc0"></div>
<div class="g" style="left:165.5px;top:646px;width:49.7px;height:34.3px;background:#ffffc0"></div>
<div class="g" style="left:215.2px;top:646px;width:48.3px;height:34.3px;background:#ffffc0"></div>
<div class="g" style="left:263.5px;top:646px;width:49.3px;height:34.3px;background:#ffffc0"></div>
<div class="g" style="left:312.8px;top:646px;width:111.4px;height:34.3px;background:#ffffc0"></div>
<div class="g" style="left:424.2px;top:646px;width:87px;height:34.3px;background:#ffffc0"></div>
<div class="g" style="left:511.2px;top:646px;width:41.9px;height:34.3px;background:#ffffc0"></div>
<div class="g" style="left:553.1px;top:646px;width:120.5px;height:34.3px;background:#ffffc0"></div>
<div class="g" style="left:673.6px;top:646px;width:133.4px;height:34.3px;background:#ffffc0"></div>
<div class="g" style="left:809.6px;top:646px;width:165.4px;height:34.3px;background:#ffffc0"></div>
<div class="g" style="left:975px;top:646px;width:58.2px;height:34.3px;background:#ffffc0"></div>
<div class="g" style="left:1033.2px;top:646px;width:108.9px;height:34.3px;background:#ffffc0"></div>
<div class="g" style="left:1142.1px;top:646px;width:112.3px;height:34.3px;background:#ffffc0"></div>
<div style="left:1283.5px;top:647.3px;width:20.9px;height:31.7px;background:#ffffc0"></div>
<div style="left:1284.3px;top:652.2px;width:17.3px;height:17.8px;background:#e6eaf2;border:2px solid #bbbdc1;border-radius:1px"></div>
<svg style="position:absolute;left:1284px;top:652px" width="18" height="18" viewBox="0 0 18 18"><path d="M3.5 9 L7.2 13 L14.5 4.5" stroke="#a8aaae" stroke-width="2.3" fill="none"/></svg>
<div class="btn" style="left:1331px;top:648px;width:37.8px;height:31.8px;"></div>
<span class="t" style="top:654.8px;font-size:18px;line-height:18px;color:#222;-webkit-text-stroke:0.35px #222;left:1049.6px;width:600px;text-align:center;transform:scaleX(0.92);transform-origin:center;">C...</span>
<div class="g" style="left:116px;top:680.3px;width:49.5px;height:34.3px;"></div>
<div class="g" style="left:165.5px;top:680.3px;width:49.7px;height:34.3px;"></div>
<div class="g" style="left:215.2px;top:680.3px;width:48.3px;height:34.3px;"></div>
<div class="g" style="left:263.5px;top:680.3px;width:49.3px;height:34.3px;"></div>
<div class="g" style="left:312.8px;top:680.3px;width:111.4px;height:34.3px;"></div>
<div class="g" style="left:424.2px;top:680.3px;width:87px;height:34.3px;"></div>
<div class="g" style="left:511.2px;top:680.3px;width:41.9px;height:34.3px;"></div>
<div class="g" style="left:553.1px;top:680.3px;width:120.5px;height:34.3px;"></div>
<div class="g" style="left:673.6px;top:680.3px;width:133.4px;height:34.3px;"></div>
<div class="g" style="left:809.6px;top:680.3px;width:165.4px;height:34.3px;"></div>
<div class="g" style="left:975px;top:680.3px;width:58.2px;height:34.3px;"></div>
<div class="g" style="left:1033.2px;top:680.3px;width:108.9px;height:34.3px;"></div>
<div class="g" style="left:1142.1px;top:680.3px;width:112.3px;height:34.3px;"></div>
<div style="left:1283.5px;top:681.6px;width:20.9px;height:31.7px;background:#fff"></div>
<div style="left:1284.3px;top:686.5px;width:17.3px;height:17.8px;background:#e6eaf2;border:2px solid #bbbdc1;border-radius:1px"></div>
<div class="btn" style="left:1331px;top:682.3px;width:37.8px;height:31.8px;border-right-color:#b8c7d9;border-bottom-color:#b8c7d9"></div>
<span class="t" style="top:689.1px;font-size:18px;line-height:18px;color:#a9a9a9;left:1049.6px;width:600px;text-align:center;transform:scaleX(0.92);transform-origin:center;text-shadow:1px 1px 0 #e4e4e4;">C...</span>
<div class="g" style="left:116px;top:714.6px;width:49.5px;height:34.3px;"></div>
<div class="g" style="left:165.5px;top:714.6px;width:49.7px;height:34.3px;"></div>
<div class="g" style="left:215.2px;top:714.6px;width:48.3px;height:34.3px;"></div>
<div class="g" style="left:263.5px;top:714.6px;width:49.3px;height:34.3px;"></div>
<div class="g" style="left:312.8px;top:714.6px;width:111.4px;height:34.3px;"></div>
<div class="g" style="left:424.2px;top:714.6px;width:87px;height:34.3px;"></div>
<div class="g" style="left:511.2px;top:714.6px;width:41.9px;height:34.3px;"></div>
<div class="g" style="left:553.1px;top:714.6px;width:120.5px;height:34.3px;"></div>
<div class="g" style="left:673.6px;top:714.6px;width:133.4px;height:34.3px;"></div>
<div class="g" style="left:809.6px;top:714.6px;width:165.4px;height:34.3px;"></div>
<div class="g" style="left:975px;top:714.6px;width:58.2px;height:34.3px;"></div>
<div class="g" style="left:1033.2px;top:714.6px;width:108.9px;height:34.3px;"></div>
<div class="g" style="left:1142.1px;top:714.6px;width:112.3px;height:34.3px;"></div>
<div style="left:1283.5px;top:715.9px;width:20.9px;height:31.7px;background:#fff"></div>
<div style="left:1284.3px;top:720.8px;width:17.3px;height:17.8px;background:#e6eaf2;border:2px solid #bbbdc1;border-radius:1px"></div>
<div class="btn" style="left:1331px;top:716.6px;width:37.8px;height:31.8px;border-right-color:#b8c7d9;border-bottom-color:#b8c7d9"></div>
<span class="t" style="top:723.4px;font-size:18px;line-height:18px;color:#a9a9a9;left:1049.6px;width:600px;text-align:center;transform:scaleX(0.92);transform-origin:center;text-shadow:1px 1px 0 #e4e4e4;">C...</span>
<div class="g" style="left:116px;top:748.9px;width:49.5px;height:34.3px;"></div>
<div class="g" style="left:165.5px;top:748.9px;width:49.7px;height:34.3px;"></div>
<div class="g" style="left:215.2px;top:748.9px;width:48.3px;height:34.3px;"></div>
<div class="g" style="left:263.5px;top:748.9px;width:49.3px;height:34.3px;"></div>
<div class="g" style="left:312.8px;top:748.9px;width:111.4px;height:34.3px;"></div>
<div class="g" style="left:424.2px;top:748.9px;width:87px;height:34.3px;"></div>
<div class="g" style="left:511.2px;top:748.9px;width:41.9px;height:34.3px;"></div>
<div class="g" style="left:553.1px;top:748.9px;width:120.5px;height:34.3px;"></div>
<div class="g" style="left:673.6px;top:748.9px;width:133.4px;height:34.3px;"></div>
<div class="g" style="left:809.6px;top:748.9px;width:165.4px;height:34.3px;"></div>
<div class="g" style="left:975px;top:748.9px;width:58.2px;height:34.3px;"></div>
<div class="g" style="left:1033.2px;top:748.9px;width:108.9px;height:34.3px;"></div>
<div class="g" style="left:1142.1px;top:748.9px;width:112.3px;height:34.3px;"></div>
<div style="left:1283.5px;top:750.2px;width:20.9px;height:31.7px;background:#fff"></div>
<div style="left:1284.3px;top:755.1px;width:17.3px;height:17.8px;background:#e6eaf2;border:2px solid #bbbdc1;border-radius:1px"></div>
<div class="btn" style="left:1331px;top:750.9px;width:37.8px;height:31.8px;border-right-color:#b8c7d9;border-bottom-color:#b8c7d9"></div>
<span class="t" style="top:757.7px;font-size:18px;line-height:18px;color:#a9a9a9;left:1049.6px;width:600px;text-align:center;transform:scaleX(0.92);transform-origin:center;text-shadow:1px 1px 0 #e4e4e4;">C...</span>
<div class="g" style="left:116px;top:783.2px;width:49.5px;height:34.3px;"></div>
<div class="g" style="left:165.5px;top:783.2px;width:49.7px;height:34.3px;"></div>
<div class="g" style="left:215.2px;top:783.2px;width:48.3px;height:34.3px;"></div>
<div class="g" style="left:263.5px;top:783.2px;width:49.3px;height:34.3px;"></div>
<div class="g" style="left:312.8px;top:783.2px;width:111.4px;height:34.3px;"></div>
<div class="g" style="left:424.2px;top:783.2px;width:87px;height:34.3px;"></div>
<div class="g" style="left:511.2px;top:783.2px;width:41.9px;height:34.3px;"></div>
<div class="g" style="left:553.1px;top:783.2px;width:120.5px;height:34.3px;"></div>
<div class="g" style="left:673.6px;top:783.2px;width:133.4px;height:34.3px;"></div>
<div class="g" style="left:809.6px;top:783.2px;width:165.4px;height:34.3px;"></div>
<div class="g" style="left:975px;top:783.2px;width:58.2px;height:34.3px;"></div>
<div class="g" style="left:1033.2px;top:783.2px;width:108.9px;height:34.3px;"></div>
<div class="g" style="left:1142.1px;top:783.2px;width:112.3px;height:34.3px;"></div>
<div style="left:1283.5px;top:784.5px;width:20.9px;height:31.7px;background:#fff"></div>
<div style="left:1284.3px;top:789.4px;width:17.3px;height:17.8px;background:#e6eaf2;border:2px solid #bbbdc1;border-radius:1px"></div>
<div class="btn" style="left:1331px;top:785.2px;width:37.8px;height:31.8px;border-right-color:#b8c7d9;border-bottom-color:#b8c7d9"></div>
<span class="t" style="top:792px;font-size:18px;line-height:18px;color:#a9a9a9;left:1049.6px;width:600px;text-align:center;transform:scaleX(0.92);transform-origin:center;text-shadow:1px 1px 0 #e4e4e4;">C...</span>
<div class="g" style="left:116px;top:817.5px;width:49.5px;height:34.3px;"></div>
<div class="g" style="left:165.5px;top:817.5px;width:49.7px;height:34.3px;"></div>
<div class="g" style="left:215.2px;top:817.5px;width:48.3px;height:34.3px;"></div>
<div class="g" style="left:263.5px;top:817.5px;width:49.3px;height:34.3px;"></div>
<div class="g" style="left:312.8px;top:817.5px;width:111.4px;height:34.3px;"></div>
<div class="g" style="left:424.2px;top:817.5px;width:87px;height:34.3px;"></div>
<div class="g" style="left:511.2px;top:817.5px;width:41.9px;height:34.3px;"></div>
<div class="g" style="left:553.1px;top:817.5px;width:120.5px;height:34.3px;"></div>
<div class="g" style="left:673.6px;top:817.5px;width:133.4px;height:34.3px;"></div>
<div class="g" style="left:809.6px;top:817.5px;width:165.4px;height:34.3px;"></div>
<div class="g" style="left:975px;top:817.5px;width:58.2px;height:34.3px;"></div>
<div class="g" style="left:1033.2px;top:817.5px;width:108.9px;height:34.3px;"></div>
<div class="g" style="left:1142.1px;top:817.5px;width:112.3px;height:34.3px;"></div>
<div style="left:1283.5px;top:818.8px;width:20.9px;height:31.7px;background:#fff"></div>
<div style="left:1284.3px;top:823.7px;width:17.3px;height:17.8px;background:#e6eaf2;border:2px solid #bbbdc1;border-radius:1px"></div>
<div class="btn" style="left:1331px;top:819.5px;width:37.8px;height:31.8px;border-right-color:#b8c7d9;border-bottom-color:#b8c7d9"></div>
<span class="t" style="top:826.3px;font-size:18px;line-height:18px;color:#a9a9a9;left:1049.6px;width:600px;text-align:center;transform:scaleX(0.92);transform-origin:center;text-shadow:1px 1px 0 #e4e4e4;">C...</span>
<div class="g" style="left:116px;top:851.8px;width:49.5px;height:33.7px;"></div>
<div class="g" style="left:165.5px;top:851.8px;width:49.7px;height:33.7px;"></div>
<div class="g" style="left:215.2px;top:851.8px;width:48.3px;height:33.7px;"></div>
<div class="g" style="left:263.5px;top:851.8px;width:49.3px;height:33.7px;"></div>
<div class="g" style="left:312.8px;top:851.8px;width:111.4px;height:33.7px;"></div>
<div class="g" style="left:424.2px;top:851.8px;width:87px;height:33.7px;"></div>
<div class="g" style="left:511.2px;top:851.8px;width:41.9px;height:33.7px;"></div>
<div class="g" style="left:553.1px;top:851.8px;width:120.5px;height:33.7px;"></div>
<div class="g" style="left:673.6px;top:851.8px;width:133.4px;height:33.7px;"></div>
<div class="g" style="left:809.6px;top:851.8px;width:165.4px;height:33.7px;"></div>
<div class="g" style="left:975px;top:851.8px;width:58.2px;height:33.7px;"></div>
<div class="g" style="left:1033.2px;top:851.8px;width:108.9px;height:33.7px;"></div>
<div class="g" style="left:1142.1px;top:851.8px;width:112.3px;height:33.7px;"></div>
<div style="left:1283.5px;top:853.1px;width:20.9px;height:31.1px;background:#fff"></div>
<div style="left:1284.3px;top:858px;width:17.3px;height:17.8px;background:#e6eaf2;border:2px solid #bbbdc1;border-radius:1px"></div>
<div class="btn" style="left:1331px;top:853.8px;width:37.8px;height:31.2px;border-right-color:#b8c7d9;border-bottom-color:#b8c7d9"></div>
<span class="t" style="top:860.6px;font-size:18px;line-height:18px;color:#a9a9a9;left:1049.6px;width:600px;text-align:center;transform:scaleX(0.92);transform-origin:center;text-shadow:1px 1px 0 #e4e4e4;">C...</span>
<span class="t" style="top:895.1px;font-size:18.5px;line-height:18.5px;-webkit-text-stroke:0.35px #262630;left:-389.4px;width:600px;text-align:right;transform:scaleX(0.92);transform-origin:right;">Material</span>
<div class="g" style="left:216px;top:886.5px;width:646.5px;height:34px;background:#ffffc0"></div>
<span class="t" style="top:930.9px;font-size:18.5px;line-height:18.5px;-webkit-text-stroke:0.35px #262630;left:-390.4px;width:600px;text-align:right;transform:scaleX(0.92);transform-origin:right;">Unidade</span>
<div class="g" style="left:216px;top:923.5px;width:646.5px;height:33px;background:#ffffc0"></div>
<span class="t" style="top:968.1px;font-size:18.5px;line-height:18.5px;-webkit-text-stroke:0.35px #262630;left:-390.4px;width:600px;text-align:right;transform:scaleX(0.92);transform-origin:right;">Natureza</span>
<div class="g" style="left:216px;top:959.5px;width:109.7px;height:34px;background:#ffffc0"></div>
<div class="g" style="left:328.8px;top:959.5px;width:332.2px;height:34px;background:#ffffc0"></div>
<span class="t" style="top:894.1px;font-size:18.5px;line-height:18.5px;-webkit-text-stroke:0.35px #262630;left:470.3px;width:600px;text-align:right;transform:scaleX(0.935);transform-origin:right;">Valor Total Dos Pedidos</span>
<div class="g" style="left:1079px;top:886.9px;width:174.5px;height:33.4px;background:#ffffc0"></div>
<span class="t" style="top:930.3px;font-size:18.5px;line-height:18.5px;-webkit-text-stroke:0.35px #262630;left:470.3px;width:600px;text-align:right;transform:scaleX(0.92);transform-origin:right;">Tipo Natureza</span>
<div class="g" style="left:1079px;top:924px;width:174.5px;height:32px;background:#ffffc0"></div>
<div class="dd" style="left:1229px;top:926px;width:22.5px;height:28px;"></div>
<svg style="position:absolute;left:1234px;top:937px" width="14" height="8" viewBox="0 0 14 8"><path d="M1 1 H13 L7 7 Z" fill="#636b80"/></svg>
<span class="t" style="top:967.1px;font-size:18.5px;line-height:18.5px;-webkit-text-stroke:0.35px #262630;left:202.3px;width:600px;text-align:right;transform:scaleX(0.92);transform-origin:right;">Operação</span>
<div class="g" style="left:809.6px;top:959.5px;width:52.9px;height:34px;background:#ffffc0"></div>
<div class="g" style="left:866.5px;top:959.5px;width:51.8px;height:34px;background:#ffffc0"></div>
<div class="g" style="left:924.6px;top:959.5px;width:328.9px;height:34px;background:#ffffc0"></div>
<div class="btn" style="left:1300.7px;top:918.5px;width:35.8px;height:39.1px;"></div>
<svg style="position:absolute;left:1290px;top:910px" width="60" height="50" viewBox="1290 910 60 50"><g transform="translate(282.2 803.9)"><rect x="1023.3" y="121.3" width="17" height="22.6" fill="#c4c4c4" stroke="#222" stroke-width="2"/>
<rect x="1035" y="122.5" width="3.6" height="19.5" fill="#d6d6d6"/>
<path d="M1022.5 120.5 H1034.8 V138.5 L1030 142.2 L1027 142.2 L1026 145 H1022.5 Z" fill="#ff0000"/>
<path d="M1034.8 121 V138.5 L1030 142.2 L1027 142.2 L1026 144.5" stroke="#111" stroke-width="1.3" fill="none"/>
<path d="M1022.3 143.8 H1027" stroke="#000" stroke-width="2.2"/>
<circle cx="1031.5" cy="129.2" r="1" fill="#ff9000"/><circle cx="1022.5" cy="127.5" r="0.9" fill="#d8d800"/><circle cx="1022.5" cy="134" r="0.9" fill="#d8d800"/></g></svg>
</body></html>
